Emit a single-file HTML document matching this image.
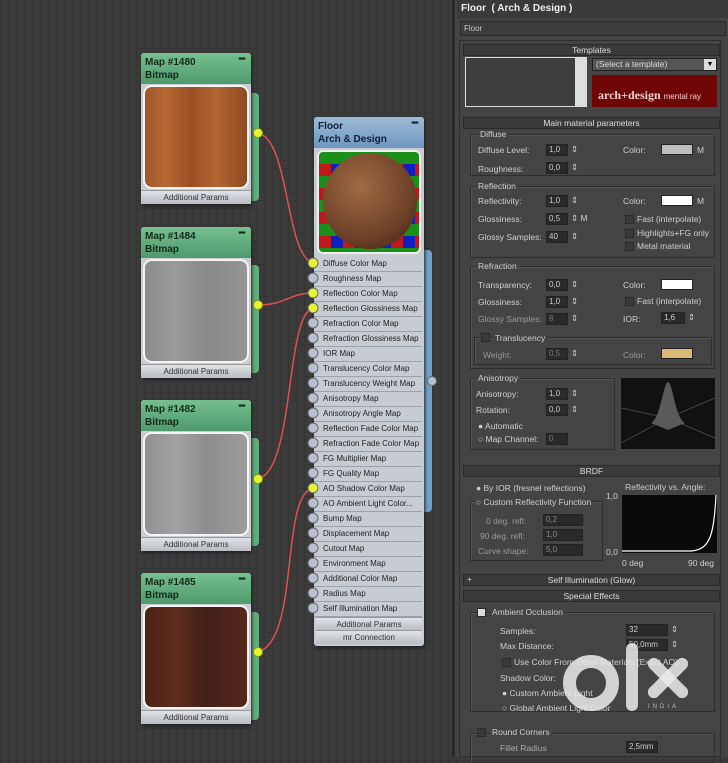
<!DOCTYPE html>
<html><head><meta charset="utf-8"><style>
*{margin:0;padding:0;box-sizing:border-box}
body{width:728px;height:757px;overflow:hidden;position:relative;font-family:"Liberation Sans",sans-serif;background:#3b3b3c;
background-image:linear-gradient(#353536 1px,transparent 1px),linear-gradient(90deg,#353536 1px,transparent 1px);background-size:8px 8px}
.a{position:absolute}
.node{position:absolute;width:110px;background:#c9cdd2;border-radius:3px;box-shadow:1px 2px 3px #222}
.nh{height:31px;background:linear-gradient(#76c08f,#4f9a6c);border-radius:3px 3px 0 0;font-size:10px;font-weight:bold;color:#142a1c;padding:3px 4px;line-height:13px;position:relative}
.nh i{position:absolute;right:6px;top:0;font-style:normal}
.img{margin:1px 2px;height:104px;border:2px solid #f4f4f4;border-radius:9px}
.ap{height:14px;font-size:8px;color:#333;text-align:center;line-height:14px;background:linear-gradient(#dfe2e6,#b9bdc3);border-top:1px solid #999}
.tab{position:absolute;width:9px;border-radius:0 4px 4px 0}
.dot{position:absolute;width:10px;height:10px;border-radius:50%;border:1px solid #666}
.y{background:#e6f532;border-color:#8a9a10}
.g{background:#b8c0d0}
.row{position:absolute;left:314px;width:108px;height:15px;border-bottom:1px solid #9ba2ab;background:#c7ccd3;font-size:8px;color:#222;padding-left:9px;line-height:14px}
.p{position:absolute;color:#cfcfcf;font-size:8.5px;white-space:nowrap}
.sp{position:absolute;height:12px;background:#2a2a2a;border:1px solid #222;color:#ccc;font-size:8px;padding-left:2px;line-height:10px}
.sec{position:absolute;border:1px solid #2e2e2e;box-shadow:inset 1px 1px 0 #555}
.bar{position:absolute;left:463px;width:257px;height:12px;background:#3a3a3a;border:1px solid #2a2a2a;color:#ddd;font-size:8.5px;text-align:center;line-height:10px}
.cb{position:absolute;width:9px;height:9px;background:#3a3a3a;border:1px solid #2a2a2a}
.sw{position:absolute;height:11px;border:1px solid #222}
</style></head><body>
<svg class="a" style="left:0;top:0" width="460" height="757">
<g fill="none" stroke="#e05050" stroke-width="1.5">
<path d="M258 133 C290 140,285 255,313 263"/>
<path d="M258 305 C285 305,290 293,313 293"/>
<path d="M258 479 C295 470,285 315,313 308"/>
<path d="M258 652 C300 640,280 495,313 488"/>
</g></svg>
<div class="tab" style="left:250px;top:93px;height:108px;background:#5fae7c"></div>
<div class="node" style="left:141px;top:53px"><div class="nh">Map #1480<br>Bitmap<i>━</i></div><div class="img" style="background:linear-gradient(90deg,#a0562a,#b86a34 20%,#9a4e24 45%,#b46632 70%,#8c4a22)"></div><div class="ap">Additional Params</div></div>
<div class="dot y" style="left:253px;top:128px"></div>
<div class="tab" style="left:250px;top:265px;height:108px;background:#5fae7c"></div>
<div class="node" style="left:141px;top:227px"><div class="nh">Map #1484<br>Bitmap<i>━</i></div><div class="img" style="background:linear-gradient(90deg,#8c8c8c,#9a9a9a 30%,#888 60%,#969696)"></div><div class="ap">Additional Params</div></div>
<div class="dot y" style="left:253px;top:300px"></div>
<div class="tab" style="left:250px;top:438px;height:108px;background:#5fae7c"></div>
<div class="node" style="left:141px;top:400px"><div class="nh">Map #1482<br>Bitmap<i>━</i></div><div class="img" style="background:linear-gradient(90deg,#909090,#a2a2a2 30%,#8e8e8e 60%,#9c9c9c)"></div><div class="ap">Additional Params</div></div>
<div class="dot y" style="left:253px;top:474px"></div>
<div class="tab" style="left:250px;top:612px;height:108px;background:#5fae7c"></div>
<div class="node" style="left:141px;top:573px"><div class="nh">Map #1485<br>Bitmap<i>━</i></div><div class="img" style="background:linear-gradient(90deg,#4a2216,#5e2c1c 30%,#42201a 60%,#56281a)"></div><div class="ap">Additional Params</div></div>
<div class="dot y" style="left:253px;top:647px"></div>
<div class="tab" style="left:423px;top:250px;height:262px;background:#6fa0cc"></div>
<div class="node" style="left:314px;top:117px;height:529px;background:#c7ccd3">
<div class="nh" style="background:linear-gradient(#9dbbd8,#6f96be);color:#102038">Floor<br>Arch &amp; Design<i>━</i></div>
<div style="margin:2px 3px;height:104px;border:2px solid #eee;border-radius:6px;background:repeating-conic-gradient(#1a8f1a 0 25%,#1020c0 0 50%,#c01818 0 75%,#ddd 0) 0 0/24px 24px;position:relative;overflow:hidden">
<div class="a" style="left:4px;top:1px;width:94px;height:96px;border-radius:50%;background:radial-gradient(circle at 40% 35%,#a06a44,#6e4228 60%,#3a2014)"></div></div>
</div>
<div class="dot g" style="left:427px;top:376px"></div>
<div class="row" style="top:257px">Diffuse Color Map</div>
<div class="row" style="top:272px">Roughness Map</div>
<div class="row" style="top:287px">Reflection Color Map</div>
<div class="row" style="top:302px">Reflection Glossiness Map</div>
<div class="row" style="top:317px">Refraction Color Map</div>
<div class="row" style="top:332px">Refraction Glossiness Map</div>
<div class="row" style="top:347px">IOR Map</div>
<div class="row" style="top:362px">Translucency Color Map</div>
<div class="row" style="top:377px">Translucency Weight Map</div>
<div class="row" style="top:392px">Anisotropy Map</div>
<div class="row" style="top:407px">Anisotropy Angle Map</div>
<div class="row" style="top:422px">Reflection Fade Color Map</div>
<div class="row" style="top:437px">Refraction Fade Color Map</div>
<div class="row" style="top:452px">FG Multiplier Map</div>
<div class="row" style="top:467px">FG Quality Map</div>
<div class="row" style="top:482px">AO Shadow Color Map</div>
<div class="row" style="top:497px">AO Ambient Light Color...</div>
<div class="row" style="top:512px">Bump Map</div>
<div class="row" style="top:527px">Displacement Map</div>
<div class="row" style="top:542px">Cutout Map</div>
<div class="row" style="top:557px">Environment Map</div>
<div class="row" style="top:572px">Additional Color Map</div>
<div class="row" style="top:587px">Radius Map</div>
<div class="row" style="top:602px">Self Illumination Map</div>
<div class="ap a" style="left:316px;top:617px;width:106px">Additional Params</div>
<div class="ap a" style="left:316px;top:630px;width:106px">mr Connection</div>
<svg class="a" style="left:307px;top:257px" width="14" height="360">
<g stroke="#666" stroke-width="1">
<circle cx="6" cy="6" r="5" fill="#e6f532"/><circle cx="6" cy="21" r="5" fill="#b8c0d0"/><circle cx="6" cy="36" r="5" fill="#e6f532"/><circle cx="6" cy="51" r="5" fill="#e6f532"/>
<circle cx="6" cy="66" r="5" fill="#b8c0d0"/><circle cx="6" cy="81" r="5" fill="#b8c0d0"/><circle cx="6" cy="96" r="5" fill="#b8c0d0"/><circle cx="6" cy="111" r="5" fill="#b8c0d0"/>
<circle cx="6" cy="126" r="5" fill="#b8c0d0"/><circle cx="6" cy="141" r="5" fill="#b8c0d0"/><circle cx="6" cy="156" r="5" fill="#b8c0d0"/><circle cx="6" cy="171" r="5" fill="#b8c0d0"/>
<circle cx="6" cy="186" r="5" fill="#b8c0d0"/><circle cx="6" cy="201" r="5" fill="#b8c0d0"/><circle cx="6" cy="216" r="5" fill="#b8c0d0"/><circle cx="6" cy="231" r="5" fill="#e6f532"/>
<circle cx="6" cy="246" r="5" fill="#b8c0d0"/><circle cx="6" cy="261" r="5" fill="#b8c0d0"/><circle cx="6" cy="276" r="5" fill="#b8c0d0"/><circle cx="6" cy="291" r="5" fill="#b8c0d0"/>
<circle cx="6" cy="306" r="5" fill="#b8c0d0"/><circle cx="6" cy="321" r="5" fill="#b8c0d0"/><circle cx="6" cy="336" r="5" fill="#b8c0d0"/><circle cx="6" cy="351" r="5" fill="#b8c0d0"/>
</g></svg>

<div class="a" style="left:452px;top:0;width:276px;height:757px;background:#444;border-left:3px solid #2a2a2a"></div>
<div class="a" style="left:457px;top:0;width:271px;height:18px;background:#3a3a3a;color:#eee;font-size:10px;font-weight:bold;padding:3px 4px">Floor &nbsp;( Arch &amp; Design )</div>
<div class="a" style="left:460px;top:21px;width:266px;height:15px;background:#3c3c3c;border:1px solid #2a2a2a;color:#ccc;font-size:8px;padding:2px 3px">Floor</div>
<div class="a" style="left:459px;top:40px;width:262px;height:717px;border:1px solid #2e2e2e"></div>
<div class="bar" style="top:44px">Templates</div>
<div class="a" style="left:465px;top:57px;width:122px;height:50px;background:#3e3e3e;border:1px solid #ddd;border-right:12px solid #ddd"></div>
<div class="a" style="left:592px;top:58px;width:125px;height:13px;background:#555;border:1px solid #222;color:#ddd;font-size:8.5px;padding-left:3px;line-height:11px">(Select a template)<span style="position:absolute;right:0;top:0;width:12px;height:11px;background:#ddd;color:#000;text-align:center;font-size:7px">▼</span></div>
<div class="a" style="left:592px;top:75px;width:125px;height:32px;background:#6e0606;color:#f0d0d0;padding:13px 0 0 6px;font-family:'Liberation Serif',serif;font-size:12px;font-weight:bold">arch+design <span style="font-size:8px;font-weight:normal;font-family:'Liberation Sans'">mental ray</span></div>
<div class="bar" style="top:117px">Main material parameters</div>
<div class="sec" style="left:470px;top:134px;width:245px;height:42px"></div>
<div class="p" style="left:478px;top:129px;background:#444;padding:0 2px">Diffuse</div>
<div class="p" style="left:478px;top:145px">Diffuse Level:</div><div class="sp" style="left:546px;top:144px;width:22px">1,0</div><div class="p" style="left:571px;top:144px">⇕</div>
<div class="p" style="left:478px;top:164px">Roughness:</div><div class="sp" style="left:546px;top:162px;width:22px">0,0</div><div class="p" style="left:571px;top:162px">⇕</div>
<div class="p" style="left:623px;top:145px">Color:</div><div class="sw" style="left:661px;top:144px;width:32px;background:#bdbdbd"></div><div class="p" style="left:697px;top:145px">M</div>
<div class="sec" style="left:470px;top:186px;width:245px;height:72px"></div>
<div class="p" style="left:476px;top:181px;background:#444;padding:0 2px">Reflection</div>
<div class="p" style="left:478px;top:196px">Reflectivity:</div><div class="sp" style="left:546px;top:195px;width:22px">1,0</div><div class="p" style="left:571px;top:195px">⇕</div>
<div class="p" style="left:478px;top:214px">Glossiness:</div><div class="sp" style="left:546px;top:213px;width:22px">0,5</div><div class="p" style="left:571px;top:213px">⇕ M</div>
<div class="p" style="left:478px;top:232px">Glossy Samples:</div><div class="sp" style="left:546px;top:231px;width:22px">40</div><div class="p" style="left:571px;top:231px">⇕</div>
<div class="p" style="left:623px;top:196px">Color:</div><div class="sw" style="left:661px;top:195px;width:32px;background:#fff"></div><div class="p" style="left:697px;top:196px">M</div>
<div class="cb" style="left:625px;top:215px"></div><div class="p" style="left:637px;top:214px">Fast (interpolate)</div>
<div class="cb" style="left:625px;top:229px"></div><div class="p" style="left:637px;top:228px">Highlights+FG only</div>
<div class="cb" style="left:625px;top:242px"></div><div class="p" style="left:637px;top:241px">Metal material</div>
<div class="sec" style="left:470px;top:266px;width:245px;height:103px"></div>
<div class="p" style="left:476px;top:261px;background:#444;padding:0 2px">Refraction</div>
<div class="p" style="left:478px;top:280px">Transparency:</div><div class="sp" style="left:546px;top:279px;width:22px">0,0</div><div class="p" style="left:571px;top:279px">⇕</div>
<div class="p" style="left:478px;top:297px">Glossiness:</div><div class="sp" style="left:546px;top:296px;width:22px">1,0</div><div class="p" style="left:571px;top:296px">⇕</div>
<div class="p" style="left:478px;top:314px;color:#999">Glossy Samples:</div><div class="sp" style="left:546px;top:313px;width:22px;color:#777">8</div><div class="p" style="left:571px;top:313px">⇕</div>
<div class="p" style="left:623px;top:280px">Color:</div><div class="sw" style="left:661px;top:279px;width:32px;background:#fff"></div>
<div class="cb" style="left:625px;top:297px"></div><div class="p" style="left:637px;top:296px">Fast (interpolate)</div>
<div class="p" style="left:623px;top:314px">IOR:</div><div class="sp" style="left:661px;top:312px;width:24px">1,6</div><div class="p" style="left:688px;top:312px">⇕</div>
<div class="sec" style="left:474px;top:337px;width:238px;height:28px"></div>
<div class="cb" style="left:481px;top:333px"></div><div class="p" style="left:493px;top:333px;background:#444;padding:0 2px">Translucency</div>
<div class="p" style="left:483px;top:350px;color:#999">Weight:</div><div class="sp" style="left:546px;top:348px;width:22px;color:#777">0,5</div><div class="p" style="left:571px;top:348px">⇕</div>
<div class="p" style="left:623px;top:350px;color:#999">Color:</div><div class="sw" style="left:661px;top:348px;width:32px;background:#d9b978"></div>
<div class="sec" style="left:470px;top:378px;width:145px;height:72px"></div>
<div class="p" style="left:476px;top:373px;background:#444;padding:0 2px">Anisotropy</div>
<div class="p" style="left:476px;top:389px">Anisotropy:</div><div class="sp" style="left:546px;top:388px;width:22px">1,0</div><div class="p" style="left:571px;top:388px">⇕</div>
<div class="p" style="left:476px;top:405px">Rotation:</div><div class="sp" style="left:546px;top:404px;width:22px">0,0</div><div class="p" style="left:571px;top:404px">⇕</div>
<div class="p" style="left:478px;top:421px">● Automatic</div>
<div class="p" style="left:478px;top:434px">○ Map Channel:</div><div class="sp" style="left:546px;top:433px;width:22px;color:#777">0</div>
<div class="a" style="left:621px;top:378px;width:94px;height:71px;background:#111"><svg width="94" height="71"><path d="M0 30 L47 40 L94 20 M0 65 L47 40 L94 60" stroke="#555" fill="none" stroke-width=".7"/><path d="M30 45 C40 40,42 5,47 4 C52 5,54 40,64 45 L47 52 Z" fill="#5a5a5a"/></svg></div>
<div class="bar" style="top:465px">BRDF</div>
<div class="p" style="left:476px;top:483px">● By IOR (fresnel reflections)</div>
<div class="sec" style="left:470px;top:501px;width:133px;height:60px"></div>
<div class="p" style="left:476px;top:497px;background:#444">○ Custom Reflectivity Function</div>
<div class="p" style="left:486px;top:516px;color:#999">0 deg. refl:</div><div class="sp" style="left:543px;top:514px;width:40px;color:#888">0,2</div>
<div class="p" style="left:480px;top:531px;color:#999">90 deg. refl:</div><div class="sp" style="left:543px;top:529px;width:40px;color:#888">1,0</div>
<div class="p" style="left:478px;top:546px;color:#999">Curve shape:</div><div class="sp" style="left:543px;top:544px;width:40px;color:#888">5,0</div>
<div class="p" style="left:625px;top:482px">Reflectivity vs. Angle:</div>
<div class="p" style="left:606px;top:491px">1,0</div><div class="p" style="left:606px;top:547px">0,0</div>
<div class="a" style="left:622px;top:495px;width:95px;height:58px;background:#0a0a0a"><svg width="95" height="58"><path d="M0 56 L70 56 C88 54,92 40,94 0" stroke="#fff" fill="none" stroke-width="1.2"/></svg></div>
<div class="p" style="left:622px;top:558px">0 deg</div><div class="p" style="left:688px;top:558px">90 deg</div>
<div class="bar" style="top:574px">Self Illumination (Glow)</div><div class="p" style="left:467px;top:574px">+</div>
<div class="bar" style="top:590px">Special Effects</div>
<div class="sec" style="left:470px;top:612px;width:245px;height:100px"></div>
<div class="cb" style="left:477px;top:608px;background:#ddd"></div><div class="p" style="left:490px;top:607px;background:#444;padding:0 2px">Ambient Occlusion</div>
<div class="p" style="left:500px;top:626px">Samples:</div><div class="sp" style="left:626px;top:624px;width:42px">32</div><div class="p" style="left:671px;top:624px">⇕</div>
<div class="p" style="left:500px;top:641px">Max Distance:</div><div class="sp" style="left:626px;top:639px;width:42px">50,0mm</div><div class="p" style="left:671px;top:639px">⇕</div>
<div class="cb" style="left:502px;top:658px"></div><div class="p" style="left:514px;top:657px">Use Color From Other Materials (Exact AO)</div>
<div class="p" style="left:500px;top:673px">Shadow Color:</div>
<div class="p" style="left:502px;top:688px">● Custom Ambient Light</div>
<div class="p" style="left:502px;top:703px">○ Global Ambient Light Color</div>
<div class="sec" style="left:470px;top:733px;width:245px;height:30px"></div>
<div class="cb" style="left:477px;top:728px"></div><div class="p" style="left:490px;top:727px;background:#444;padding:0 2px">Round Corners</div>
<div class="p" style="left:500px;top:743px;color:#aaa">Fillet Radius</div><div class="sp" style="left:626px;top:741px;width:32px">2,5mm</div>
<div class="a" style="left:563px;top:655px;width:56px;height:56px;border:13px solid rgba(235,235,235,.85);border-radius:50%"></div>
<div class="a" style="left:626px;top:643px;width:12px;height:68px;background:rgba(235,235,235,.85);border-radius:6px"></div>
<div class="a" style="left:642px;top:672px;width:52px;height:12px;background:rgba(235,235,235,.85);border-radius:6px;transform:rotate(45deg)"></div>
<div class="a" style="left:642px;top:672px;width:52px;height:12px;background:rgba(235,235,235,.85);border-radius:6px;transform:rotate(-45deg)"></div>
<div class="p" style="left:648px;top:704px;font-size:6px;letter-spacing:3px;color:#bbb">INDIA</div>
</body></html>
